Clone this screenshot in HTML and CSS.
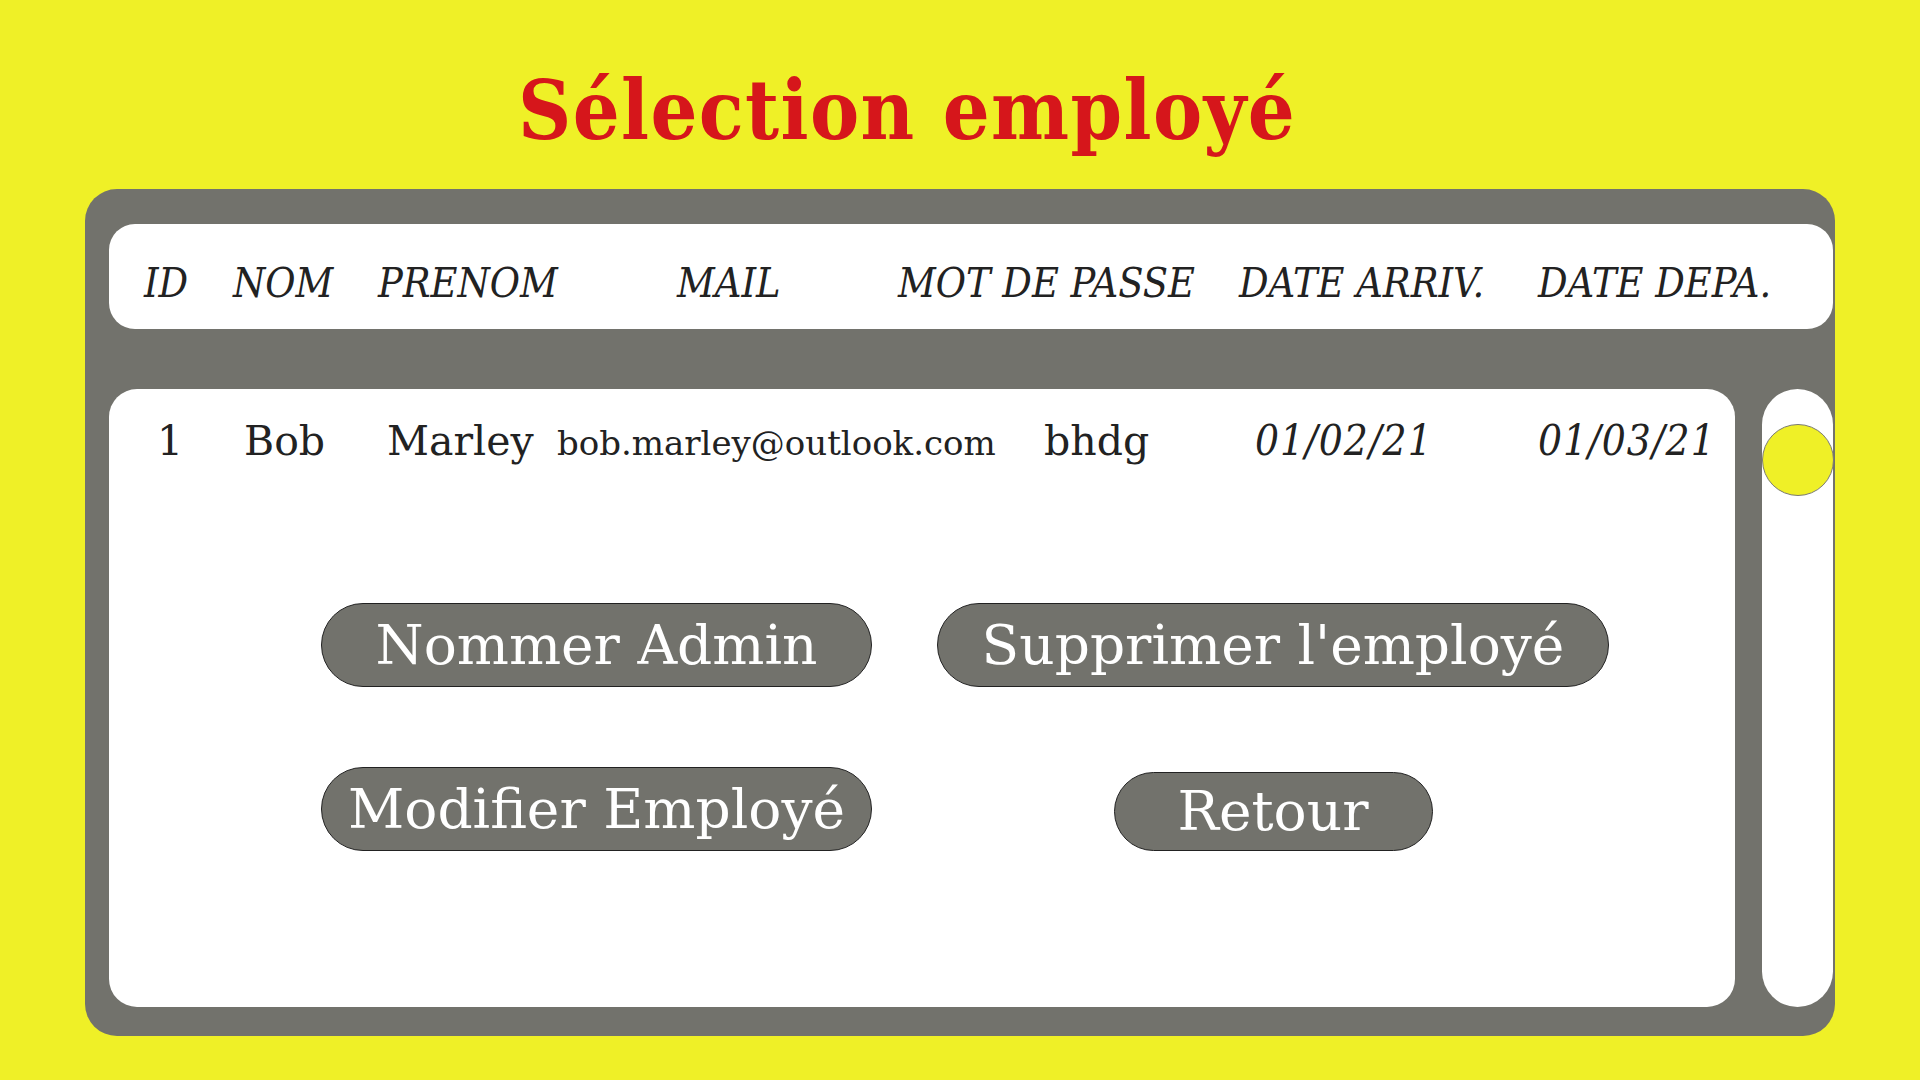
FILE: index.html
```html
<!DOCTYPE html>
<html lang="fr">
<head>
<meta charset="utf-8">
<title>Sélection employé</title>
<link rel="stylesheet" href="styles.css">
</head>
<body>
<div class="page">
  <h1 class="title">Sélection employé</h1>
  <div class="panel">
    <div class="thead">
      <span class="th">ID</span>
      <span class="th">NOM</span>
      <span class="th">PRENOM</span>
      <span class="th">MAIL</span>
      <span class="th">MOT DE PASSE</span>
      <span class="th">DATE ARRIV.</span>
      <span class="th">DATE DEPA.</span>
    </div>
    <div class="main">
      <div class="tbody">
        <div class="trow">
          <span class="td">1</span>
          <span class="td">Bob</span>
          <span class="td">Marley</span>
          <span class="td mail">bob.marley@outlook.com</span>
          <span class="td">bhdg</span>
          <span class="td date">01/02/21</span>
          <span class="td date">01/03/21</span>
        </div>
        <div class="actions">
          <button class="btn">Nommer Admin</button>
          <button class="btn">Supprimer l'employé</button>
          <button class="btn">Modifier Employé</button>
          <button class="btn btn-back">Retour</button>
        </div>
      </div>
      <div class="track">
        <div class="thumb"></div>
      </div>
    </div>
  </div>
</div>
</body>
</html>
```
FILE: styles.css
```css
html, body {
  margin: 0;
  padding: 0;
}
body {
  background: #eff027;
  width: 1920px;
  height: 1080px;
  overflow: hidden;
  font-family: "DejaVu Serif", "Liberation Serif", serif;
  color: #222222;
}
.page {
  padding-top: 69px;
}
.title {
  margin: 0 0 38px 518px;
  font-family: "DejaVu Serif Condensed", "DejaVu Serif", serif;
  font-stretch: condensed;
  font-weight: 700;
  font-size: 82px;
  line-height: 82px;
  letter-spacing: 1.4px;
  color: #d6161b;
  white-space: nowrap;
}
.panel {
  margin-left: 85px;
  width: 1750px;
  height: 847px;
  box-sizing: border-box;
  background: #72726c;
  border-radius: 32px;
  padding: 35px 2px 29px 24px;
  display: flex;
  flex-direction: column;
  gap: 60px;
}
.thead {
  height: 105px;
  box-sizing: border-box;
  background: #ffffff;
  border-radius: 26px;
  display: grid;
  grid-template-columns: 35px 89px 145px 299px 221px 341px 299px 1fr;
  align-items: center;
  padding-top: 12px;
}
.th {
  font-family: "DejaVu Serif Condensed", "DejaVu Serif", serif;
  font-stretch: condensed;
  font-style: italic;
  font-size: 41px;
  white-space: nowrap;
}
.th:first-child { grid-column: 2; }
.main {
  flex: 1;
  display: flex;
  gap: 27px;
}
.tbody {
  width: 1627px;
  background: #ffffff;
  border-radius: 28px;
}
.trow {
  margin-top: 28px;
  display: grid;
  grid-template-columns: 48px 87px 143px 170px 487px 211px 283px 1fr;
  align-items: baseline;
  line-height: 48px;
}
.td {
  font-size: 41px;
  white-space: nowrap;
}
.td:first-child { grid-column: 2; }
.td.mail {
  font-size: 34px;
}
.td.date {
  font-style: italic;
  font-family: "DejaVu Serif Condensed", "DejaVu Serif", serif;
  font-stretch: condensed;
  font-size: 42px;
  letter-spacing: 1px;
}
.actions {
  margin: 136px 0 0 212px;
  display: grid;
  grid-template-columns: 551px 672px;
  column-gap: 65px;
  row-gap: 80px;
  align-items: end;
  justify-items: center;
}
.btn {
  width: 100%;
  height: 84px;
  box-sizing: border-box;
  border: 1.5px solid #222222;
  border-radius: 42px;
  background: #72726c;
  color: #ffffff;
  font-family: "DejaVu Serif", serif;
  font-size: 55px;
  padding: 0;
  line-height: 1;
}
.btn-back {
  width: 319px;
  height: 79px;
}
.track {
  width: 71px;
  background: #ffffff;
  border-radius: 36px;
  padding-top: 35px;
  box-sizing: border-box;
}
.thumb {
  width: 72px;
  height: 72px;
  box-sizing: border-box;
  border-radius: 50%;
  background: #eff027;
  border: 1px solid #7a7a72;
}
```
